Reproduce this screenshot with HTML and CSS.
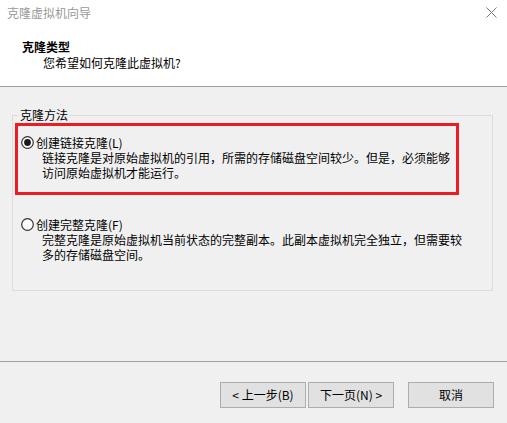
FILE: index.html
```html
<!DOCTYPE html>
<html lang="zh-CN">
<head>
<meta charset="utf-8">
<title>克隆虚拟机向导</title>
<link rel="stylesheet" href="styles.css">
</head>
<body>
<div class="window">
  <div class="top">
    <div class="titlebar">
      <span class="title">克隆虚拟机向导</span>
      <svg class="close" width="11" height="11" viewBox="0 0 11 11"><path d="M0.5 0.5 L10.5 10.5 M10.5 0.5 L0.5 10.5" stroke="#7a7a7a" stroke-width="1" fill="none"/></svg>
    </div>
    <div class="heading">克隆类型</div>
    <div class="subheading">您希望如何克隆此虚拟机?</div>
  </div>
  <div class="main">
    <fieldset class="group">
      <legend class="legend">克隆方法</legend>
      <div class="highlight">
        <div class="option-row">
          <svg class="radio" width="13" height="13" viewBox="0 0 13 13"><circle cx="6.5" cy="6.5" r="5.8" fill="#fff" stroke="#333" stroke-width="1.2"/><circle cx="6.5" cy="6.5" r="3.4" fill="#1a1a1a"/></svg>
          <span class="option-label">创建链接克隆(L)</span>
        </div>
        <div class="desc">链接克隆是对原始虚拟机的引用，所需的存储磁盘空间较少。但是，必须能够<br>访问原始虚拟机才能运行。</div>
      </div>
      <div class="option">
        <div class="option-row">
          <svg class="radio" width="13" height="13" viewBox="0 0 13 13"><circle cx="6.5" cy="6.5" r="5.8" fill="#fff" stroke="#333" stroke-width="1.2"/></svg>
          <span class="option-label">创建完整克隆(F)</span>
        </div>
        <div class="desc">完整克隆是原始虚拟机当前状态的完整副本。此副本虚拟机完全独立，但需要较<br>多的存储磁盘空间。</div>
      </div>
    </fieldset>
  </div>
  <div class="footer">
    <button class="btn">&lt; 上一步(B)</button>
    <button class="btn">下一页(N) &gt;</button>
    <button class="btn btn-cancel">取消</button>
  </div>
</div>
</body>
</html>
```

FILE: styles.css
```css
* { box-sizing: border-box; }
html, body {
  margin: 0;
  padding: 0;
  background: #f0f0f0;
}
body {
  font-family: "Noto Sans CJK SC", "Microsoft YaHei", sans-serif;
  font-size: 12px;
  color: #000;
}
.window {
  width: 507px;
  height: 423px;
  display: flex;
  flex-direction: column;
  background: #f0f0f0;
  overflow: hidden;
}
.top {
  height: 87px;
  background: #fff;
  border-bottom: 1px solid #a0a0a0;
  flex: none;
}
.titlebar {
  height: 26px;
  display: flex;
  align-items: center;
  justify-content: space-between;
  padding: 0 10px 0 7px;
}
.title {
  color: #999;
  line-height: 26px;
}
.close {
  display: block;
  margin-top: -2px;
}
.heading {
  margin: 13px 0 0 22px;
  font-weight: bold;
  line-height: 16px;
}
.subheading {
  margin-left: 43px;
  line-height: 16px;
}
.main {
  flex: 1;
  padding-top: 21px;
}
.group {
  margin: 0 0 0 12px;
  width: 481px;
  padding: 0 0 28px 0;
  border: 1px solid #dcdcdc;
  min-width: 0;
}
.legend {
  margin-left: 5px;
  padding: 0 2px;
  line-height: 14px;
}
.highlight {
  margin: 1px 0 0 2px;
  width: 444px;
  height: 72px;
  border: 3px solid #ed1c24;
  padding: 9px 0 0 3px;
}
.option {
  margin-top: 22px;
  padding-left: 8px;
}
.option-row {
  display: flex;
  align-items: center;
  gap: 2px;
  height: 15px;
}
.radio {
  display: block;
  flex: none;
}
.option-label {
  line-height: 15px;
}
.desc {
  margin-left: 21px;
  line-height: 15px;
  white-space: nowrap;
}
.footer {
  height: 62px;
  flex: none;
  border-top: 1px solid #a0a0a0;
  display: flex;
  justify-content: flex-end;
  align-items: flex-start;
  padding: 20px 13px 0 0;
}
.btn {
  width: 86px;
  height: 26px;
  margin: 0 0 0 2px;
  padding: 0;
  background: #e1e1e1;
  border: 1px solid #adadad;
  font-family: "Noto Sans CJK SC", "Microsoft YaHei", sans-serif;
  font-size: 12px;
  color: #000;
  line-height: 24px;
}
.btn-cancel {
  width: 86px;
  margin-left: 14px;
}
```
